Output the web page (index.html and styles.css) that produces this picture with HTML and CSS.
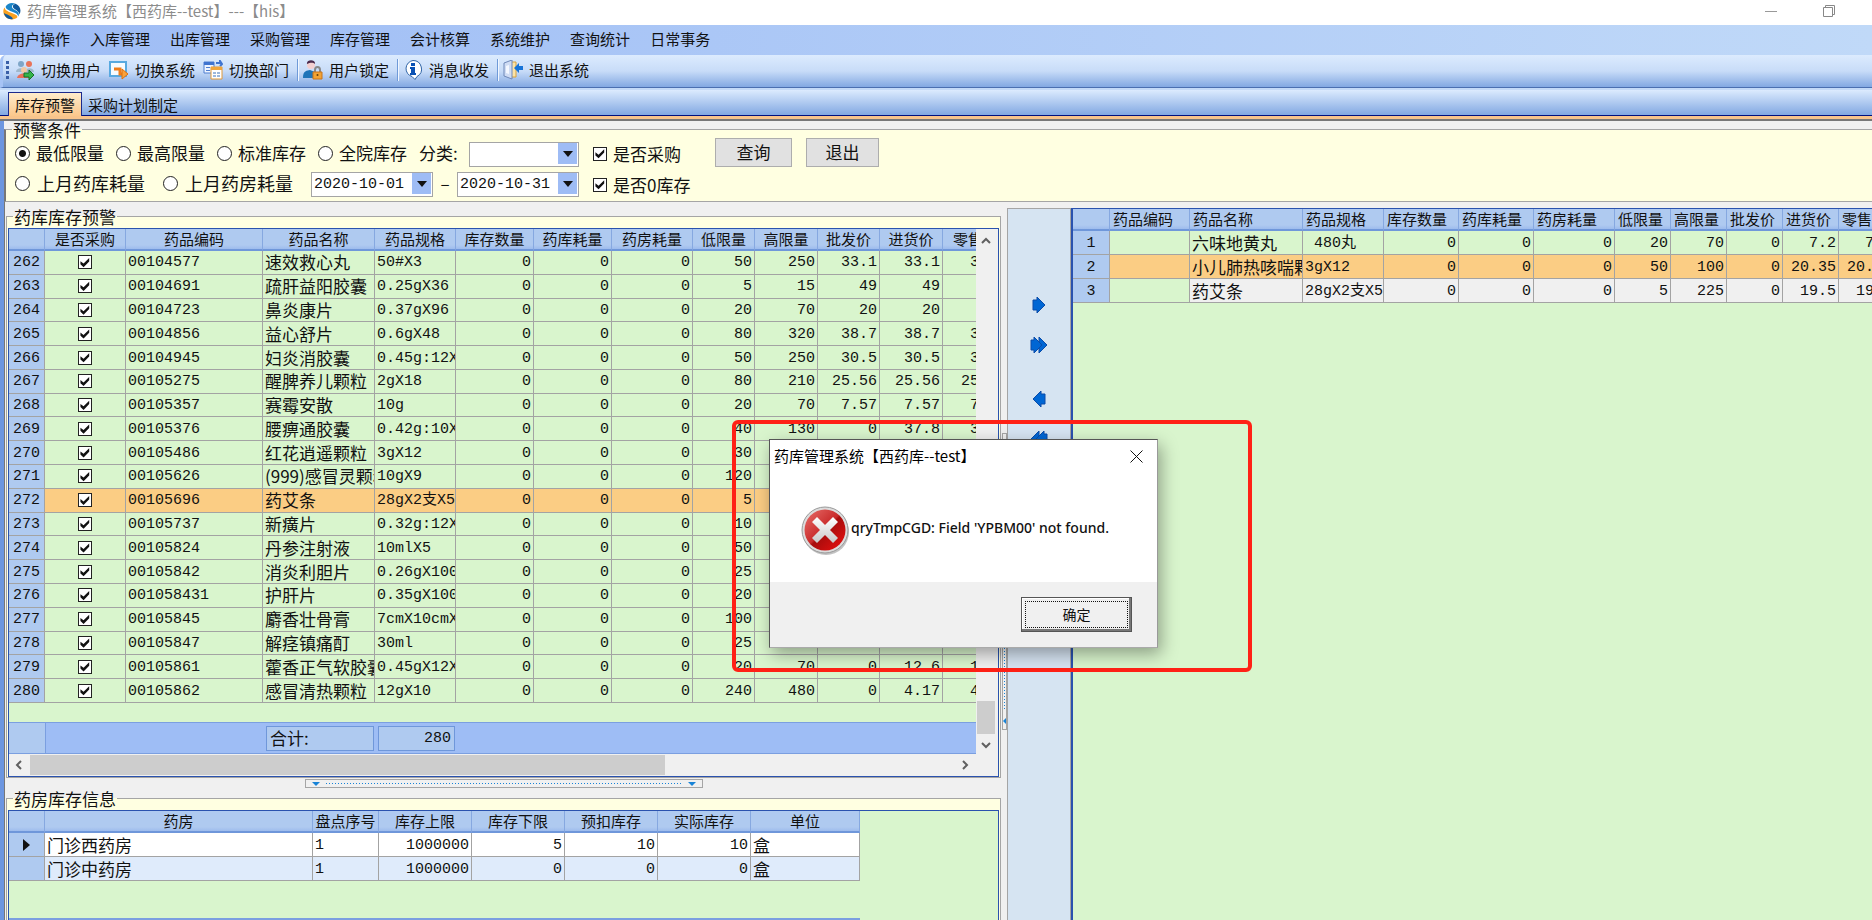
FILE: index.html
```html
<!DOCTYPE html>
<html lang="zh-CN">
<head>
    <meta charset="UTF-8">
    <meta name="viewport" content="width=device-width, initial-scale=1.0">
    <title>药库管理系统</title>
    <link rel="stylesheet" href="styles.css">
</head>
<body>
    <header class="titlebar">
        <svg class="logo" viewBox="0 0 20 20">
            <circle cx="10" cy="10" r="9.500" fill="#fff"/>
            <path d="M3 5C5 1 10 0 14 2C9 3 9 6 12 8C16 10 19 12 17 16C16 12 12 12 8 10C4 8 3 7 3 5z" fill="#1c86c8"/>
            <path d="M14 2C19 4 21 10 18 14C18 10 14 9 12 7C10 5 11 3 14 2z" fill="#0f5a9e"/>
            <path d="M2 6C2 9 5 10 9 12C13 14 16 14 16 17C12 21 4 20 1 14C0 11 0 8 2 6z" fill="#f9a11e"/>
            <path d="M1 12C3 14 10 15 11 19C6 20 2 17 1 12z" fill="#0f5a9e"/>
        </svg>
        <span class="title-text">药库管理系统【西药库--test】---【his】</span>
        <div class="window-buttons">
            <button aria-label="最小化"><svg width="12" height="12" viewBox="0 0 12 12"><path d="M0 6.500h12" stroke="#999"/></svg></button>
            <button aria-label="还原"><svg width="12" height="12" viewBox="0 0 12 12" fill="none" stroke="#888"><path d="M.5 2.500h9v9h-9zM2.500 2.500v-2h9v9h-2"/></svg></button>
        </div>
    </header>
    <nav class="menu">
        <a href="#">用户操作</a>
        <a href="#">入库管理</a>
        <a href="#">出库管理</a>
        <a href="#">采购管理</a>
        <a href="#">库存管理</a>
        <a href="#">会计核算</a>
        <a href="#">系统维护</a>
        <a href="#">查询统计</a>
        <a href="#">日常事务</a>
    </nav>
    <div class="toolbar">
        <span class="grip"></span>
        <button>
            <svg viewBox="0 0 20 20">
                <circle cx="6" cy="4" r="3" fill="#7fa6c8"/><circle cx="14" cy="4" r="3" fill="#e8745a"/>
                <path d="M1 12C1 7 10 7 10 12zM10 12C10 7 19 7 19 12z" fill="#9fb8cc"/>
                <circle cx="9" cy="10" r="3" fill="#f1c9a4"/><path d="M2 18C3 12 14 12 15 18z" fill="#e9705a"/>
                <path d="M9 13h5v-3l5 5-5 5v-3H9z" fill="#35b44a" stroke="#15702a"/>
            </svg>切换用户
        </button>
        <button>
            <svg viewBox="0 0 20 20">
                <path d="M1 2h16v14H1z" fill="#f6fbff" stroke="#58a9e0" stroke-width="2"/>
                <path d="M5 9h6v5h3" fill="none" stroke="#ef7d1a" stroke-width="3"/>
                <path d="M13 9v10l6-5z" fill="#f9a23b" stroke="#e0700c"/>
            </svg>切换系统
        </button>
        <button>
            <svg viewBox="0 0 20 20">
                <path d="M1 2h10v11H1z" fill="#eef4ff" stroke="#4f7fd0"/><path d="M1 2h10v3H1z" fill="#3f74d0"/>
                <path d="M3 7.500h4M3 10.500h4" stroke="#4f7fd0"/>
                <path d="M13 3h4v-2l2 3-2 2" fill="none" stroke="#3f74d0" stroke-width="2"/>
                <path d="M8 7h11v12H8z" fill="#fff" stroke="#e09a3a"/><path d="M8 7h11v3H8z" fill="#f0a63c"/>
                <path d="M10 12h3v2h-3zM14 12h3v2h-3zM10 15h3v2h-3zM14 15h3v2h-3z" fill="#9db8dc"/>
            </svg>切换部门
        </button>
        <span class="separator"></span>
        <button>
            <svg viewBox="0 0 20 20">
                <path d="M0 18C0 10 4 11 7 10L12 12V18z" fill="#1f74b8"/>
                <circle cx="8" cy="5" r="4" fill="#f3cfd0"/><path d="M4 4C3-1 13-1 12 4C9 2 7 3 4 4z" fill="#4a2a4c"/>
                <path d="M12 13v-3c0-4 5-4 5 0v3" fill="none" stroke="#888" stroke-width="2"/>
                <path d="M10 12h9v7h-9z" fill="#f2a334" stroke="#c9741a"/><circle cx="14.500" cy="15" r="1" fill="#643c08"/>
            </svg>用户锁定
        </button>
        <span class="separator"></span>
        <button>
            <svg viewBox="0 0 20 20">
                <path d="M10 .5a8.500 8.500 0 0 1 4 16l-2 3-3-3A8.200 8.200 0 0 1 10 .5z" fill="#fff" stroke="#2f64a6"/>
                <path d="M8 3h4v3H8zM7 7h5v6h1v2H7v-2h1V9H7z" fill="#0b52b4"/>
            </svg>消息收发
        </button>
        <span class="separator"></span>
        <button>
            <svg viewBox="0 0 20 20">
                <path d="M8 2h5v15H8z" fill="#fbe3a8" stroke="#d8a23c"/>
                <path d="M1 3l8-3v19l-8-3z" fill="#cfdcf4" stroke="#6f88b8"/><path d="M3 6l3-1v9l-3-1z" fill="#f3f7ff"/>
                <path d="M11 8l5-5v3h4v4h-4v3z" fill="#1673d8"/>
            </svg>退出系统
        </button>
    </div>
    <div class="tabs" role="tablist">
        <button class="tab active" role="tab">库存预警</button>
        <button class="tab" role="tab">采购计划制定</button>
    </div>

    <main class="workspace">
        <fieldset class="group filter">
            <legend>预警条件</legend>
            <div class="filter-body">
                <div class="filter-main">
                    <div class="filter-row">
                        <label class="option"><input type="radio" name="mode" checked>最低限量</label>
                        <label class="option"><input type="radio" name="mode">最高限量</label>
                        <label class="option"><input type="radio" name="mode">标准库存</label>
                        <label class="option"><input type="radio" name="mode">全院库存</label>
                        <label class="kind" for="kind">分类:</label>
                        <span class="picker kind-picker"><select id="kind"><option></option></select></span>
                    </div>
                    <div class="filter-row">
                        <label class="option wide"><input type="radio" name="mode">上月药库耗量</label>
                        <label class="option wide"><input type="radio" name="mode">上月药房耗量</label>
                        <span class="picker"><select aria-label="开始日期"><option>2020-10-01</option></select></span>
                        <span class="dash">–</span>
                        <span class="picker"><select aria-label="结束日期"><option>2020-10-31</option></select></span>
                    </div>
                </div>
                <div class="filter-checks">
                    <label><input type="checkbox" checked>是否采购</label>
                    <label><input type="checkbox" checked>是否0库存</label>
                </div>
                <div class="filter-buttons">
                    <button>查询</button>
                    <button>退出</button>
                </div>
            </div>
        </fieldset>

        <div class="panes">
            <div class="left-pane">
                <fieldset class="group stock">
                    <legend>药库库存预警</legend>
                    <div class="grid-box stock-box">
                        <div class="grid-view">
                            <table class="grid stock-grid">
                                <colgroup>
                                    <col class="w36"><col class="w81"><col class="w137"><col class="w112"><col class="w81"><col class="w78"><col class="w78"><col class="w81"><col class="w62"><col class="w63"><col class="w62"><col class="w63"><col class="w66">
                                </colgroup>
                                <thead>
                                    <tr><th></th><th>是否采购</th><th>药品编码</th><th>药品名称</th><th>药品规格</th><th>库存数量</th><th>药库耗量</th><th>药房耗量</th><th>低限量</th><th>高限量</th><th>批发价</th><th>进货价</th><th>零售价</th></tr>
                                </thead>
                                <tbody id="stockRows"></tbody>
                            </table>
                        </div>
                        <div class="summary">
                            <span class="summary-head"></span>
                            <span class="summary-label">合计:</span>
                            <span class="summary-value">280</span>
                        </div>
                        <div class="vscroll">
                            <svg width="10" height="7" viewBox="0 0 10 7"><path d="M1 6l4-4 4 4" fill="none" stroke="#606060" stroke-width="2"/></svg>
                            <span class="track"></span>
                            <span class="thumb"></span>
                            <svg width="10" height="7" viewBox="0 0 10 7"><path d="M1 1l4 4 4-4" fill="none" stroke="#606060" stroke-width="2"/></svg>
                        </div>
                        <div class="hscroll">
                            <svg width="7" height="10" viewBox="0 0 7 10"><path d="M6 1L2 5l4 4" fill="none" stroke="#606060" stroke-width="2"/></svg>
                            <span class="thumb"></span>
                            <svg width="7" height="10" viewBox="0 0 7 10"><path d="M1 1l4 4-4 4" fill="none" stroke="#606060" stroke-width="2"/></svg>
                        </div>
                    </div>
                </fieldset>
                <div class="hsplit"><span class="hsplit-bar"><i></i><b></b><i></i></span></div>
                <fieldset class="group pharmacy">
                    <legend>药房库存信息</legend>
                    <div class="grid-box pharmacy-box">
                        <table class="grid pharmacy-grid">
                            <colgroup>
                                <col class="w36"><col class="w268"><col class="w66"><col class="w93"><col class="w93"><col class="w93"><col class="w93"><col class="w109">
                            </colgroup>
                            <thead>
                                <tr><th></th><th>药房</th><th>盘点序号</th><th>库存上限</th><th>库存下限</th><th>预扣库存</th><th>实际库存</th><th>单位</th></tr>
                            </thead>
                            <tbody>
                                <tr><th><span class="current"></span></th><td class="name">门诊西药房</td><td>1</td><td class="num">1000000</td><td class="num">5</td><td class="num">10</td><td class="num">10</td><td class="name">盒</td></tr>
                                <tr class="alt"><th></th><td class="name">门诊中药房</td><td>1</td><td class="num">1000000</td><td class="num">0</td><td class="num">0</td><td class="num">0</td><td class="name">盒</td></tr>
                            </tbody>
                        </table>
                        <div class="pharmacy-foot"></div>
                    </div>
                </fieldset>
            </div>
            <div class="vsplit"><span class="vsplit-bar"><b></b><i></i></span></div>
            <div class="transfer">
                <button aria-label="添加"><svg width="14" height="18" viewBox="0 0 14 18"><path d="M1 4h4V1l8 8-8 8v-3H1z"/></svg></button>
                <button aria-label="全部添加"><svg width="18" height="18" viewBox="0 0 18 18"><path d="M9 1l8 8-8 8z"/><path d="M1 4h3V1l8 8-8 8v-3H1z"/></svg></button>
                <button class="back" aria-label="移除"><svg width="14" height="18" viewBox="0 0 14 18"><path d="M13 4H9V1L1 9l8 8v-3h4z"/></svg></button>
                <button aria-label="全部移除"><svg width="18" height="18" viewBox="0 0 18 18"><path d="M9 1L1 9l8 8z"/><path d="M17 4h-3V1L6 9l8 8v-3h3z"/></svg></button>
            </div>
            <div class="grid-box plan-box">
                <table class="grid plan-grid">
                    <colgroup>
                        <col class="w37"><col class="w80"><col class="w113"><col class="w81"><col class="w75"><col class="w75"><col class="w81"><col class="w56"><col class="w56"><col class="w56"><col class="w56"><col class="w56">
                    </colgroup>
                    <thead>
                        <tr><th></th><th>药品编码</th><th>药品名称</th><th>药品规格</th><th>库存数量</th><th>药库耗量</th><th>药房耗量</th><th>低限量</th><th>高限量</th><th>批发价</th><th>进货价</th><th>零售价</th></tr>
                    </thead>
                    <tbody>
                        <tr><th>1</th><td></td><td class="name">六味地黄丸</td><td> 480丸</td><td class="num">0</td><td class="num">0</td><td class="num">0</td><td class="num">20</td><td class="num">70</td><td class="num">0</td><td class="num">7.2</td><td class="num">7.2</td></tr>
                        <tr class="selected"><th>2</th><td></td><td class="name">小儿肺热咳喘颗粒</td><td>3gX12</td><td class="num">0</td><td class="num">0</td><td class="num">0</td><td class="num">50</td><td class="num">100</td><td class="num">0</td><td class="num">20.35</td><td class="num">20.35</td></tr>
                        <tr class="focus"><th>3</th><td></td><td class="name">药艾条</td><td>28gX2支X5</td><td class="num">0</td><td class="num">0</td><td class="num">0</td><td class="num">5</td><td class="num">225</td><td class="num">0</td><td class="num">19.5</td><td class="num">19.5</td></tr>
                    </tbody>
                </table>
            </div>
        </div>
    </main>

    <div class="highlight"></div>
    <div class="dialog" role="alertdialog" aria-labelledby="dialogTitle">
        <div class="dialog-title">
            <span id="dialogTitle">药库管理系统【西药库--test】</span>
            <button aria-label="关闭"><svg width="13" height="13" viewBox="0 0 13 13"><path d="M.5.5l12 12M12.500.5l-12 12" stroke="#111" fill="none"/></svg></button>
        </div>
        <div class="dialog-body">
            <svg class="error-icon" width="50" height="52" viewBox="0 0 50 52">
                <defs>
                    <linearGradient id="red" x1="0" y1="0" x2="1" y2="1">
                        <stop offset="0" stop-color="#e8706c"/><stop offset=".48" stop-color="#c92a2a"/><stop offset=".52" stop-color="#a60d0d"/><stop offset="1" stop-color="#f01010"/>
                    </linearGradient>
                    <linearGradient id="silver" x1="0" y1="0" x2="0" y2="1">
                        <stop offset="0" stop-color="#fff"/><stop offset="1" stop-color="#c8c8c8"/>
                    </linearGradient>
                </defs>
                <circle cx="26" cy="27" r="23" fill="#999" opacity=".6"/>
                <circle cx="25" cy="25" r="23" fill="#dcdcdc" stroke="#999"/>
                <circle cx="25" cy="25" r="20.500" fill="url(#red)"/>
                <path d="M17 12l8 8 8-8 5 5-8 8 8 8-5 5-8-8-8 8-5-5 8-8-8-8z" fill="url(#silver)"/>
            </svg>
            <p>qryTmpCGD: Field 'YPBM00' not found.</p>
        </div>
        <div class="dialog-foot"><button><span>确定</span></button></div>
    </div>

    <script>
        // 序号, 编码, 名称, 规格, 低限量, 高限量, 批发价, 进货价
        const stock = [
            [262, '00104577', '速效救心丸', '50#X3', 50, 250, 33.1, 33.1],
            [263, '00104691', '疏肝益阳胶囊', '0.25gX36', 5, 15, 49, 49],
            [264, '00104723', '鼻炎康片', '0.37gX96', 20, 70, 20, 20],
            [265, '00104856', '益心舒片', '0.6gX48', 80, 320, 38.7, 38.7],
            [266, '00104945', '妇炎消胶囊', '0.45g:12X3', 50, 250, 30.5, 30.5],
            [267, '00105275', '醒脾养儿颗粒', '2gX18', 80, 210, 25.56, 25.56],
            [268, '00105357', '赛霉安散', '10g', 20, 70, 7.57, 7.57],
            [269, '00105376', '腰痹通胶囊', '0.42g:10X5', 40, 130, 0, 37.8],
            [270, '00105486', '红花逍遥颗粒', '3gX12', 30, 100, 0, 36.5],
            [271, '00105626', '(999)感冒灵颗粒', '10gX9', 120, 480, 0, 12.5],
            [272, '00105696', '药艾条', '28gX2支X5', 5, 225, 0, 19.5],
            [273, '00105737', '新癀片', '0.32g:12X3', 10, 50, 0, 28.9],
            [274, '00105824', '丹参注射液', '10mlX5', 50, 150, 0, 15.5],
            [275, '00105842', '消炎利胆片', '0.26gX100', 25, 70, 0, 9.8],
            [276, '001058431', '护肝片', '0.35gX100', 20, 70, 0, 18.6],
            [277, '00105845', '麝香壮骨膏', '7cmX10cmX8', 100, 300, 0, 8.5],
            [278, '00105847', '解痉镇痛酊', '30ml', 25, 70, 0, 4.74],
            [279, '00105861', '藿香正气软胶囊', '0.45gX12X2', 20, 70, 0, 12.6],
            [280, '00105862', '感冒清热颗粒', '12gX10', 240, 480, 0, 4.17]
        ];

        function numCells(values) {
            return values.map(v => `<td class="num">${v}</td>`).join('');
        }

        document.getElementById('stockRows').innerHTML = stock.map(function(r) {
            const cls = r[0] === 272 ? ' class="selected"' : '';
            return `<tr${cls}><th>${r[0]}</th>` +
                `<td class="check"><input type="checkbox" aria-label="${r[2]}" checked></td>` +
                `<td>${r[1]}</td><td class="name">${r[2]}</td><td>${r[3]}</td>` +
                numCells([0, 0, 0, r[4], r[5], r[6], r[7], r[7]]) + '</tr>';
        }).join('');
    </script>
</body>
</html>
```

FILE: styles.css
```css
* {
    box-sizing: border-box;
}
body {
    margin: 0;
    height: 100vh;
    display: flex;
    flex-direction: column;
    overflow: hidden;
    position: relative;
    font-family: "Noto Sans CJK SC", sans-serif;
    font-size: 15px;
    line-height: 20px;
    color: #111;
    background: #fff;
}
button, select, input {
    font: inherit;
    color: inherit;
    margin: 0;
}
button {
    padding: 0;
    border: none;
    background: none;
}

/* title, menu, toolbar */
.titlebar {
    flex: none;
    height: 25px;
    display: flex;
    align-items: center;
    padding: 0 37px 4px 3px;
    color: #8c8c8c;
}
.logo {
    width: 18px;
    height: 18px;
    margin-right: 6px;
}
.title-text {
    flex: 1;
}
.window-buttons {
    display: flex;
    gap: 46px;
}
.window-buttons svg {
    display: block;
}
.menu {
    flex: none;
    height: 30px;
    display: flex;
    align-items: center;
    gap: 20px;
    padding: 0 10px 2px;
    background: linear-gradient(90deg, #9ebcf5, #c0d9f8);
}
.menu a {
    color: #111;
    text-decoration: none;
}
.toolbar {
    flex: none;
    height: 33px;
    display: flex;
    align-items: center;
    padding: 0 3px 2px;
    border-left: 3px solid #a6c3f5;
    border-bottom: 1px solid #4a6fb0;
    border-radius: 6px 0 0 0;
    background: linear-gradient(#dcebfe, #c8dcf8 50%, #82a8e2);
}
.toolbar button {
    display: flex;
    align-items: center;
    gap: 6px;
    margin-right: 8px;
}
.toolbar svg {
    width: 20px;
    height: 20px;
}
.grip {
    width: 3px;
    height: 19px;
    margin-right: 6px;
    background: repeating-linear-gradient(#3a5fa8 0 3px, transparent 3px 5px);
}
.separator {
    width: 2px;
    height: 22px;
    margin-right: 4px;
    border-left: 1px solid #6f9ad8;
    background: #f1f7ff;
}
.tabs {
    flex: none;
    height: 33px;
    display: flex;
    align-items: flex-end;
    padding: 0 0 5px 8px;
    border-top: 2px solid #c4daf8;
    background: linear-gradient(#dcebfe, #82a8e2 25px, #00107e 25px 26px, #f8c48c 26px 29px, #777 29px);
}
.tab {
    height: 23px;
    padding: 1px 6px;
}
.tab.active {
    height: 24px;
    border: 1px solid #1c2a8c;
    border-bottom: none;
    background: linear-gradient(#ffeccb, #fbc78b);
}

/* group boxes */
.workspace {
    flex: 1;
    min-height: 0;
    display: flex;
    flex-direction: column;
    border-left: 4px solid #6c96e0;
    background: #f0f0f0;
}
.group {
    margin: 0;
    min-width: 0;
    padding: 0 1px;
    border: 1px solid #a5a5a5;
    background: #ffffe1;
}
.group legend {
    margin-left: 5px;
    padding: 0 1px;
    font-size: 17px;
    line-height: 17px;
}
.filter {
    flex: none;
    border-left: 2px solid #777;
    border-right: none;
}
.filter-body {
    display: flex;
    height: 63px;
    padding-left: 8px;
    font-size: 17px;
}
.filter-main {
    width: 578px;
}
.filter-row {
    display: flex;
    align-items: center;
    height: 30px;
}
.option {
    width: 101px;
    display: flex;
    align-items: center;
    gap: 6px;
    white-space: nowrap;
}
.option.wide {
    width: 148px;
    gap: 7px;
    font-size: 18px;
}
input[type="radio"] {
    appearance: none;
    width: 15px;
    height: 15px;
    border: 1px solid #222;
    border-radius: 50%;
    background: #fff;
}
input[type="radio"]:checked {
    background: radial-gradient(#111 3px, #fff 4px);
}
input[type="checkbox"] {
    appearance: none;
    display: block;
    width: 14px;
    height: 14px;
    border: 1px solid #222;
    background: #fff;
}
input[type="checkbox"]:checked::before {
    content: "";
    display: block;
    width: 12px;
    height: 12px;
    background: #111;
    clip-path: polygon(12% 40%, 38% 60%, 85% 14%, 85% 42%, 38% 90%, 12% 66%);
}
.kind {
    width: 50px;
}
.picker {
    position: relative;
    width: 122px;
    height: 25px;
}
.picker::after {
    content: "";
    position: absolute;
    top: 2px;
    right: 2px;
    bottom: 2px;
    width: 19px;
    pointer-events: none;
    background: #9ebcf5;
}
.picker::before {
    content: "";
    position: absolute;
    z-index: 1;
    top: 10px;
    right: 6px;
    border: 5px solid transparent;
    border-top: 6px solid #111;
    border-bottom: none;
    pointer-events: none;
}
.picker select {
    appearance: none;
    width: 100%;
    height: 100%;
    padding: 0 2px;
    border: 1px solid #a5a5a5;
    border-radius: 0;
    background: #fff;
    font-family: "Liberation Mono", monospace;
    font-size: 15px;
}
.kind-picker {
    width: 110px;
}
.dash {
    width: 24px;
    text-align: center;
}
.filter-checks label {
    width: 122px;
    height: 31px;
    display: flex;
    align-items: center;
    gap: 6px;
}
.filter-buttons {
    display: flex;
    gap: 14px;
}
.filter-buttons button {
    width: 77px;
    height: 29px;
    padding-bottom: 2px;
    border: 1px solid #adadad;
    background: #e1e1e1;
}
.filter-buttons button:last-child {
    width: 73px;
}

/* panes */
.panes {
    flex: 1;
    min-height: 0;
    display: flex;
    padding: 6px 0 0 1px;
    border-left: 1px solid #777;
}
.left-pane {
    flex: none;
    width: 995px;
    display: flex;
    flex-direction: column;
}
.stock {
    flex: 1;
    min-height: 0;
    display: flex;
    flex-direction: column;
}
.stock-box {
    flex: 1;
    min-height: 0;
    margin-top: 3px;
    display: grid;
    grid-template-columns: minmax(0, 1fr) 22px;
    grid-template-rows: minmax(0, 1fr) 32px 22px;
}
.grid-box {
    border: 1px solid #2a52ae;
    background-color: #d9f5cd;
}
.grid-view {
    overflow: hidden;
}
.grid {
    table-layout: fixed;
    width: 0;
    border-collapse: separate;
    border-spacing: 0;
    font-family: "Liberation Mono", "Noto Sans CJK SC", monospace;
    font-size: 15px;
    line-height: 20px;
}
.stock-grid {
    height: 474px;
}
.grid th, .grid td {
    height: 22px;
    padding: 2px 2px 0;
    overflow: hidden;
    white-space: pre;
    border-right: 1px solid #a3a3a3;
    border-bottom: 1px solid #a3a3a3;
    text-align: left;
}
.grid td {
    background: #d9f5cd;
}
.grid .num {
    text-align: right;
}
.grid .name {
    padding: 0 2px;
    font-family: "Noto Sans CJK SC", sans-serif;
    font-size: 17px;
}
.grid .check {
    padding: 0;
}
.grid th {
    font-weight: normal;
    text-align: center;
    background: #afcaf0;
}
.grid thead th {
    padding: 0;
    font-family: "Noto Sans CJK SC", sans-serif;
    border-right: 1px solid #86a8e0;
    border-bottom: 2px solid #6f97da;
    background: linear-gradient(#afcaf0 80%, #9dbced);
}
.grid .selected td {
    background: #fbcd84;
}
.check input {
    margin: 0 auto;
}
.w36 { width: 36px; }
.w37 { width: 37px; }
.w56 { width: 56px; }
.w62 { width: 62px; }
.w63 { width: 63px; }
.w66 { width: 66px; }
.w75 { width: 75px; }
.w78 { width: 78px; }
.w80 { width: 80px; }
.w81 { width: 81px; }
.w93 { width: 93px; }
.w109 { width: 109px; }
.w112 { width: 112px; }
.w113 { width: 113px; }
.w137 { width: 137px; }
.w268 { width: 268px; }

.summary {
    grid-column: 1;
    grid-row: 2;
    display: flex;
    border-top: 1px solid #7b9fe0;
    border-bottom: 1px solid #7b9fe0;
    background: #9ebdf5;
    font-size: 17px;
}
.summary-head {
    width: 37px;
    margin-right: 220px;
    border-right: 1px solid #7b9fe0;
    background: #afcaf0;
}
.summary-label, .summary-value {
    width: 108px;
    height: 25px;
    margin: 3px 4px 0 0;
    padding: 1px 3px;
    border: 1px solid #6f97da;
    background: #afcaf0;
}
.summary-value {
    width: 77px;
    padding-top: 2px;
    font-family: "Liberation Mono", monospace;
    font-size: 15px;
    text-align: right;
}
.vscroll {
    grid-column: 2;
    grid-row: 1 / 3;
    display: flex;
    flex-direction: column;
    align-items: center;
    padding: 8px 3px 5px 1px;
    background: #f0f0f0;
}
.track {
    flex: 1;
}
.vscroll .thumb {
    width: 18px;
    height: 33px;
    margin-bottom: 8px;
    background: #cdcdcd;
}
.hscroll {
    grid-column: 1 / 3;
    grid-row: 3;
    display: flex;
    align-items: center;
    justify-content: space-between;
    padding: 0 29px 0 6px;
    background: #f0f0f0;
}
.hscroll .thumb {
    width: 635px;
    height: 20px;
    margin: 0 auto 0 8px;
    background: #cdcdcd;
}
.hsplit {
    flex: none;
    height: 12px;
    display: flex;
    justify-content: center;
}
.hsplit-bar {
    width: 398px;
    height: 9px;
    margin-top: 1px;
    display: flex;
    align-items: center;
    justify-content: space-between;
    padding: 0 6px;
    border: 1px solid #a5a5a5;
}
.hsplit-bar b {
    width: 356px;
    height: 1px;
    background: repeating-linear-gradient(90deg, #1883d7 0 1px, transparent 1px 3px);
}
.hsplit-bar i {
    border: 4px solid transparent;
    border-top: 4px solid #1883d7;
    border-bottom: none;
}
.pharmacy {
    flex: none;
    height: 130px;
    border-bottom: none;
}
.pharmacy-box {
    height: 110px;
    margin-top: 3px;
    display: flex;
    flex-direction: column;
    justify-content: space-between;
    border-bottom: none;
}
.pharmacy-grid {
    height: 70px;
}
.pharmacy-grid td {
    background: #fff;
}
.pharmacy-grid .alt td {
    background: #dfebfb;
}
.pharmacy-foot {
    width: 851px;
    height: 2px;
    background: #7b9fe0;
}
.current {
    display: inline-block;
    vertical-align: middle;
    border: 6px solid transparent;
    border-left: 7px solid #111;
    border-right: none;
}
.vsplit {
    flex: none;
    width: 6px;
    display: flex;
}
.vsplit-bar {
    width: 5px;
    height: 297px;
    margin: 225px 0 0 1px;
    display: flex;
    flex-direction: column;
    align-items: center;
    justify-content: space-between;
    padding: 25px 0 5px;
    border: 1px solid #a5a5a5;
}
.vsplit-bar b {
    width: 1px;
    height: 250px;
    background: repeating-linear-gradient(#1883d7 0 1px, transparent 1px 3px);
}
.vsplit-bar i {
    border: 3px solid transparent;
    border-right: 3px solid #1883d7;
    border-left: none;
}
.transfer {
    flex: none;
    width: 64px;
    display: flex;
    flex-direction: column;
    align-items: center;
    gap: 16px;
    padding-top: 84px;
    border: 1px solid #a5a5a5;
    border-bottom: none;
    background: #d6e4f2;
}
.transfer button {
    height: 24px;
}
.transfer .back {
    margin-top: 14px;
}
.transfer svg {
    display: block;
    fill: #0066d4;
    stroke: #0a4ba8;
}
.plan-box {
    flex: 1;
    min-width: 0;
    overflow: hidden;
    border-left-width: 2px;
    border-right: none;
    border-bottom: none;
}
.plan-grid {
    height: 94px;
}
.plan-grid thead th {
    padding-left: 3px;
    text-align: left;
}
.plan-grid .focus td:nth-child(n+3) {
    background: #f0f0f0;
}

/* message box */
.highlight {
    position: absolute;
    left: 732px;
    top: 420px;
    width: 520px;
    height: 252px;
    border: 4px solid #ff2116;
    border-radius: 6px;
}
.dialog {
    position: absolute;
    left: 769px;
    top: 439px;
    width: 389px;
    border: 1px solid #555;
    border-right-color: #999;
    border-bottom-color: #aaa;
    background: #fff;
    box-shadow: 3px 6px 16px rgba(0, 0, 0, 0.35);
}
.dialog-title {
    height: 32px;
    display: flex;
    align-items: center;
    justify-content: space-between;
    padding: 0 14px 0 4px;
    color: #000;
}
.dialog-title svg {
    display: block;
}
.dialog-body {
    height: 110px;
    display: flex;
    align-items: center;
    padding: 8px 0 0 30px;
}
.dialog-body p {
    margin: 0 0 6px 1px;
    font-family: "Noto Sans", sans-serif;
    font-size: 14px;
    font-weight: 500;
    white-space: nowrap;
}
.dialog-foot {
    height: 65px;
    padding: 15px 25px 0 0;
    text-align: right;
    background: #f0f0f0;
}
.dialog-foot button {
    width: 111px;
    height: 35px;
    padding: 3px;
    border: 1px solid #555;
    box-shadow: inset -2px -2px #777, inset 1px 1px #fff;
    font-size: 14px;
    background: #f0f0f0;
}
.dialog-foot span {
    display: block;
    height: 27px;
    line-height: 24px;
    border: 1px dotted #111;
}
```
